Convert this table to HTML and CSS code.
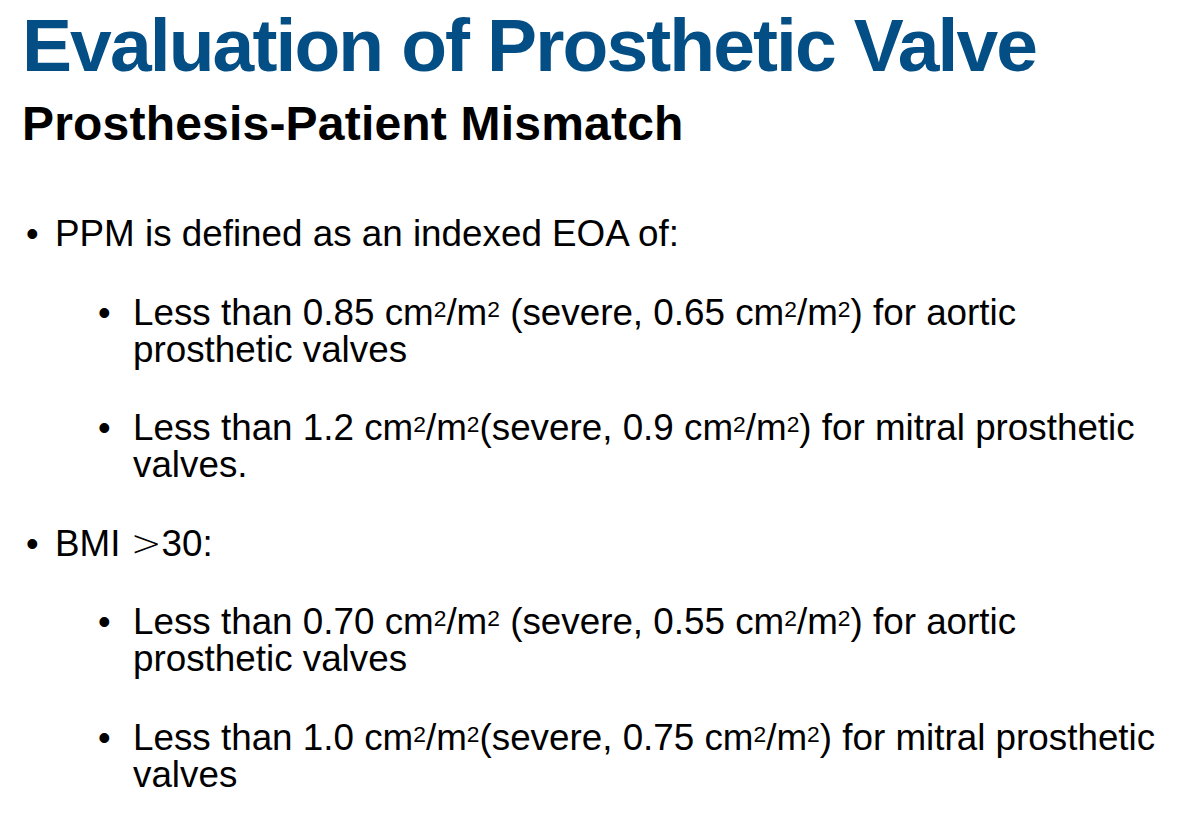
FILE: index.html
```html
<!DOCTYPE html>
<html>
<head>
<meta charset="utf-8">
<link rel="stylesheet" href="styles.css">
</head>
<body>
<div class="slide">
  <h1 class="title">Evaluation of Prosthetic Valve</h1>
  <h2 class="subtitle">Prosthesis-Patient Mismatch</h2>
  <ul class="list">
    <li class="item l1"><span class="bullet">•</span><span class="text">PPM is defined as an indexed EOA of:</span></li>
    <li class="item l2"><span class="bullet">•</span><span class="text">Less than 0.85 cm<sup>2</sup>/m<sup>2</sup> (severe, 0.65 cm<sup>2</sup>/m<sup>2</sup>) for aortic prosthetic valves</span></li>
    <li class="item l2"><span class="bullet">•</span><span class="text">Less than 1.2 cm<sup>2</sup>/m<sup>2</sup>(severe, 0.9 cm<sup>2</sup>/m<sup>2</sup>) for mitral prosthetic valves.</span></li>
    <li class="item l1"><span class="bullet">•</span><span class="text">BMI <span class="gt">&gt;</span>30:</span></li>
    <li class="item l2"><span class="bullet">•</span><span class="text">Less than 0.70 cm<sup>2</sup>/m<sup>2</sup> (severe, 0.55 cm<sup>2</sup>/m<sup>2</sup>) for aortic prosthetic valves</span></li>
    <li class="item l2"><span class="bullet">•</span><span class="text">Less than 1.0 cm<sup>2</sup>/m<sup>2</sup>(severe, 0.75 cm<sup>2</sup>/m<sup>2</sup>) for mitral prosthetic valves</span></li>
  </ul>
</div>
</body>
</html>
```

FILE: styles.css
```css
html, body {
  margin: 0;
  padding: 0;
  background: #ffffff;
}

.slide {
  width: 1194px;
  height: 837px;
  box-sizing: border-box;
  padding: 8px 0 0 22px;
  font-family: "Liberation Sans", Arial, sans-serif;
  color: #000000;
  overflow: hidden;
}

.title {
  margin: 0;
  font-size: 75px;
  line-height: 75px;
  font-weight: bold;
  color: #034e85;
  letter-spacing: -1.9px;
}

.subtitle {
  margin: 17px 0 0 0;
  font-size: 48px;
  line-height: 47px;
  font-weight: bold;
  color: #000000;
  letter-spacing: 0.2px;
}

.list {
  list-style: none;
  margin: 68px 0 0 0;
  padding: 0;
  display: flex;
  flex-direction: column;
  gap: 41.5px;
}

.item {
  display: flex;
  font-size: 36.8px;
  line-height: 37px;
}

.bullet {
  flex: none;
  font-size: 36px;
}

.l1 .bullet {
  width: 29px;
  padding-left: 4px;
}

.l2 {
  padding-left: 76px;
}

.l2 .bullet {
  width: 35px;
  padding-left: 0;
}

.text {
  flex: none;
  max-width: 1040px;
}

sup {
  font-size: 0.62em;
  line-height: 0;
  vertical-align: 0.36em;
}

.gt {
  font-family: "DejaVu Sans", sans-serif;
  font-weight: 300;
}
```
